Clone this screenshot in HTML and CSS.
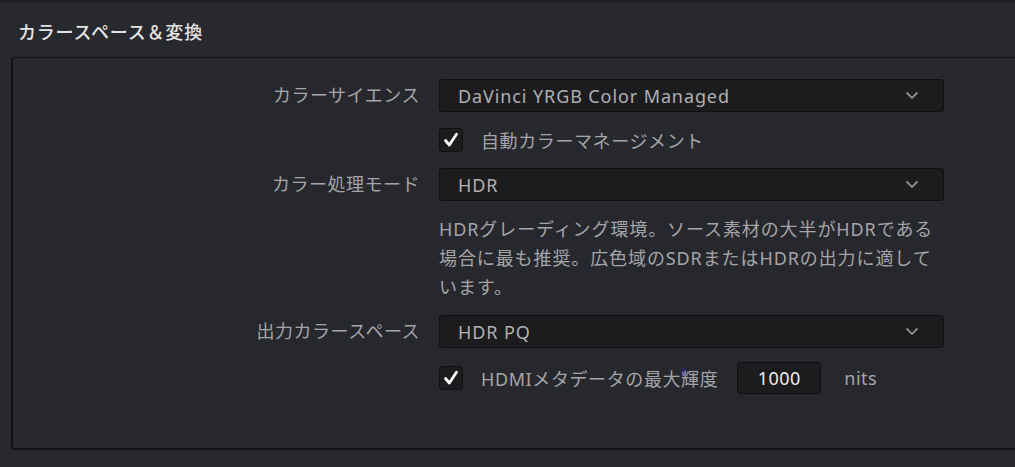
FILE: index.html
```html
<!DOCTYPE html>
<html lang="ja">
<head>
<meta charset="utf-8">
<title>カラースペース＆変換</title>
<link rel="stylesheet" href="styles.css">
</head>
<body>
<div class="topline"></div>
<header class="header"><h1 class="title">カラースペース＆変換</h1></header>
<section class="panel">
  <div class="form">
    <div class="label">カラーサイエンス</div>
    <div class="select"><span class="select-text">DaVinci YRGB Color Managed</span><svg class="chev" width="14" height="9" viewBox="0 0 14 9"><polyline points="1.5,1.5 7,7 12.5,1.5" fill="none" stroke="#8d8d90" stroke-width="1.8"/></svg></div>

    <div class="label"></div>
    <label class="check-row"><span class="checkbox"><svg width="18" height="18" viewBox="0 0 18 18"><path d="M3.5 9.5 L7.3 14 L14.5 3.2" fill="none" stroke="#fff" stroke-width="2.8" stroke-linecap="round" stroke-linejoin="round"/></svg></span><span class="check-text">自動カラーマネージメント</span></label>

    <div class="label">カラー処理モード</div>
    <div class="select"><span class="select-text">HDR</span><svg class="chev" width="14" height="9" viewBox="0 0 14 9"><polyline points="1.5,1.5 7,7 12.5,1.5" fill="none" stroke="#8d8d90" stroke-width="1.8"/></svg></div>

    <div class="label"></div>
    <p class="desc">HDRグレーディング環境。ソース素材の大半がHDRである<br>場合に最も推奨。広色域のSDRまたはHDRの出力に適して<br>います。</p>

    <div class="label">出力カラースペース</div>
    <div class="select"><span class="select-text">HDR PQ</span><svg class="chev" width="14" height="9" viewBox="0 0 14 9"><polyline points="1.5,1.5 7,7 12.5,1.5" fill="none" stroke="#8d8d90" stroke-width="1.8"/></svg></div>

    <div class="label"></div>
    <div class="check-row last"><span class="checkbox"><svg width="18" height="18" viewBox="0 0 18 18"><path d="M3.5 9.5 L7.3 14 L14.5 3.2" fill="none" stroke="#fff" stroke-width="2.8" stroke-linecap="round" stroke-linejoin="round"/></svg></span><span class="check-text">HDMIメタデータの最大輝度</span><span class="num">1000</span><span class="unit">nits</span></div>
  </div>
</section>
</body>
</html>
```
FILE: styles.css
```css
html, body {
  margin: 0;
  padding: 0;
  background: #28292e;
  width: 1015px;
  height: 467px;
  overflow: hidden;
  font-family: "Noto Sans", "Noto Sans CJK JP", sans-serif;
  color: #a7a7aa;
}
.topline {
  height: 3px;
  background: #1e1f22;
}
.header {
  height: 54px;
  display: flex;
  align-items: center;
  padding-left: 18px;
  box-sizing: border-box;
  padding-top: 2px;
}
.title {
  margin: 0;
  font-size: 18px;
  font-weight: 500;
  color: #e4e4e6;
  letter-spacing: 0.8px;
}
.panel {
  margin-left: 11px;
  height: 393px;
  box-sizing: border-box;
  border-top: 1px solid #121214;
  border-left: 2px solid #121214;
  border-bottom: 2px solid #121214;
  border-radius: 4px 0 0 4px;
  background: #27282d;
}
.form {
  display: grid;
  grid-template-columns: 407px 505px;
  column-gap: 19px;
  row-gap: 16px;
  padding-top: 21px;
}
.label {
  text-align: right;
  font-size: 18px;
  line-height: 33px;
  color: #a5a5a8;
  letter-spacing: 0.5px;
  white-space: nowrap;
}
.select {
  height: 33px;
  box-sizing: border-box;
  background: #1c1c1e;
  border: 1px solid #101011;
  border-radius: 3px;
  display: flex;
  align-items: center;
  justify-content: space-between;
  padding: 0 24px 0 18px;
}
.select-text {
  font-size: 18px;
  color: #b0b0b3;
  letter-spacing: 0.9px;
}
.chev {
  display: block;
}
.check-row {
  display: flex;
  align-items: center;
  height: 24px;
}
.check-row.last {
  height: 32px;
  margin-top: -2px;
}
.checkbox {
  width: 24px;
  height: 24px;
  box-sizing: border-box;
  background: #1c1c1e;
  border: 1px solid #0f0f10;
  border-radius: 3px;
  display: flex;
  align-items: center;
  justify-content: center;
  flex: none;
}
.check-text {
  margin-left: 18px;
  font-size: 18px;
  color: #a5a5a8;
  letter-spacing: 0.6px;
  white-space: nowrap;
}
.num {
  margin-left: 19px;
  width: 84px;
  height: 32px;
  box-sizing: border-box;
  background: #1c1c1e;
  border: 1px solid #0f0f10;
  border-radius: 3px;
  display: flex;
  align-items: center;
  justify-content: center;
  font-size: 18px;
  color: #ececee;
  letter-spacing: 0.5px;
}
.unit {
  margin-left: 23px;
  font-size: 18px;
  color: #a5a5a8;
  letter-spacing: 0.5px;
}
.desc {
  margin: -2.5px 0;
  font-size: 18px;
  line-height: 29px;
  color: #a5a5a8;
  letter-spacing: 0.9px;
  white-space: nowrap;
}
```
